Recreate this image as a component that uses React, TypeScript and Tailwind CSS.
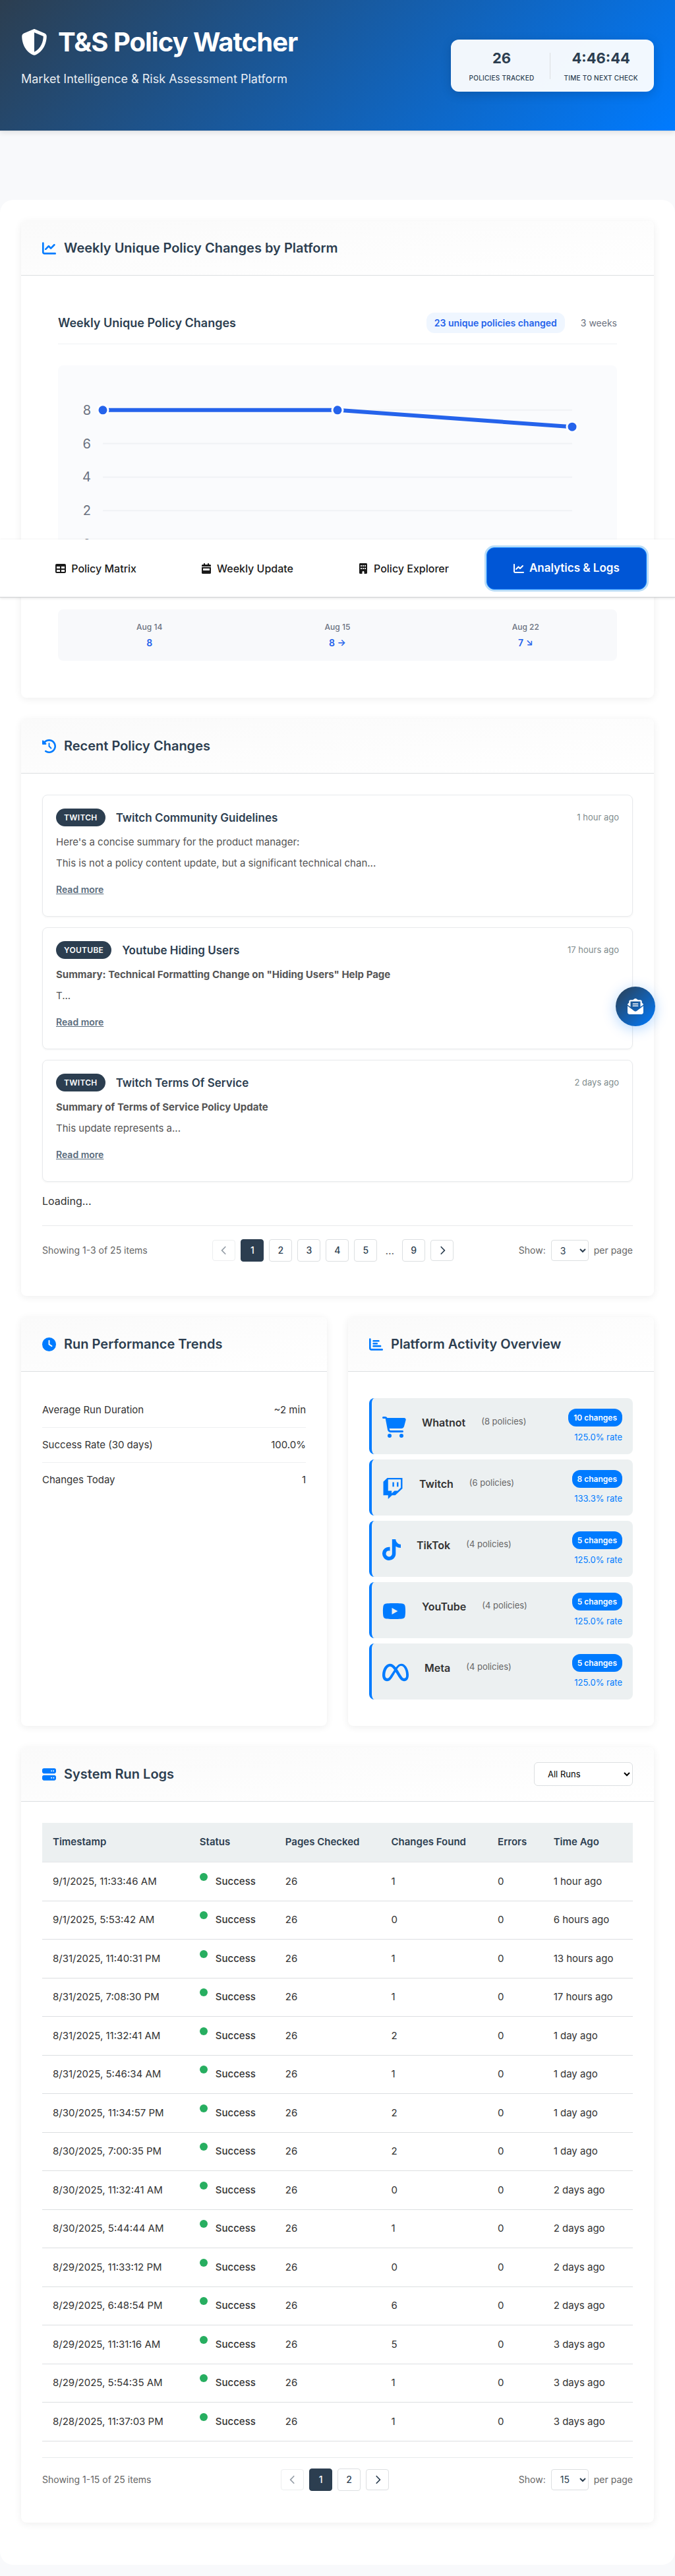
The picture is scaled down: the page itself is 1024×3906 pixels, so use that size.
import { useState } from "react";
import type { ReactNode } from "react";
import type { IconType } from "react-icons";
import {
  FaBuilding,
  FaCartShopping,
  FaChartBar,
  FaChartLine,
  FaChevronLeft,
  FaChevronRight,
  FaClock,
  FaClockRotateLeft,
  FaEnvelopeOpenText,
  FaMeta,
  FaServer,
  FaShieldHalved,
  FaTable,
  FaTiktok,
  FaTwitch,
  FaYoutube,
} from "react-icons/fa6";

const CalendarWeekIcon = ({ className }: { className?: string }) => (
  <svg viewBox="0 0 448 512" fill="currentColor" className={className} aria-hidden="true">
    <path d="M128 0c17.700 0 32 14.300 32 32V64H288V32c0-17.700 14.300-32 32-32s32 14.300 32 32V64h48c26.500 0 48 21.500 48 48v48H0V112C0 85.500 21.500 64 48 64H96V32c0-17.700 14.300-32 32-32zM0 192H448V464c0 26.500-21.500 48-48 48H48c-26.500 0-48-21.500-48-48V192zm80 64c-8.800 0-16 7.200-16 16v64c0 8.800 7.200 16 16 16H368c8.800 0 16-7.200 16-16V272c0-8.800-7.200-16-16-16H80z" />
  </svg>
);

const navItems = [
  { label: "Policy Matrix", icon: FaTable },
  { label: "Weekly Update", icon: CalendarWeekIcon },
  { label: "Policy Explorer", icon: FaBuilding },
  { label: "Analytics & Logs", icon: FaChartLine },
];

const weeks = [
  { label: "Aug 14", value: 8, arrow: "" },
  { label: "Aug 15", value: 8, arrow: " →" },
  { label: "Aug 22", value: 7, arrow: " ↘" },
];

const changes = [
  {
    platform: "Twitch",
    title: "Twitch Community Guidelines",
    ago: "1 hour ago",
    heading: "Here's a concise summary for the product manager:",
    bold: false,
    body: "This is not a policy content update, but a significant technical chan...",
  },
  {
    platform: "Youtube",
    title: "Youtube Hiding Users",
    ago: "17 hours ago",
    heading: 'Summary: Technical Formatting Change on "Hiding Users" Help Page',
    bold: true,
    body: "T...",
  },
  {
    platform: "Twitch",
    title: "Twitch Terms Of Service",
    ago: "2 days ago",
    heading: "Summary of Terms of Service Policy Update",
    bold: true,
    body: "This update represents a...",
  },
];

const trends = [
  ["Average Run Duration", "~2 min"],
  ["Success Rate (30 days)", "100.0%"],
  ["Changes Today", "1"],
];

const platforms = [
  { name: "Whatnot", policies: 8, changes: 10, rate: "125.0%", icon: FaCartShopping, width: "w-9" },
  { name: "Twitch", policies: 6, changes: 8, rate: "133.3%", icon: FaTwitch, width: "w-8" },
  { name: "TikTok", policies: 4, changes: 5, rate: "125.0%", icon: FaTiktok, width: "w-7" },
  { name: "YouTube", policies: 4, changes: 5, rate: "125.0%", icon: FaYoutube, width: "w-9" },
  { name: "Meta", policies: 4, changes: 5, rate: "125.0%", icon: FaMeta, width: "w-10" },
];

const columns = ["Timestamp", "Status", "Pages Checked", "Changes Found", "Errors", "Time Ago"];

const runs: [string, number, string][] = [
  ["9/1/2025, 11:33:46 AM", 1, "1 hour ago"],
  ["9/1/2025, 5:53:42 AM", 0, "6 hours ago"],
  ["8/31/2025, 11:40:31 PM", 1, "13 hours ago"],
  ["8/31/2025, 7:08:30 PM", 1, "17 hours ago"],
  ["8/31/2025, 11:32:41 AM", 2, "1 day ago"],
  ["8/31/2025, 5:46:34 AM", 1, "1 day ago"],
  ["8/30/2025, 11:34:57 PM", 2, "1 day ago"],
  ["8/30/2025, 7:00:35 PM", 2, "1 day ago"],
  ["8/30/2025, 11:32:41 AM", 0, "2 days ago"],
  ["8/30/2025, 5:44:44 AM", 1, "2 days ago"],
  ["8/29/2025, 11:33:12 PM", 0, "2 days ago"],
  ["8/29/2025, 6:48:54 PM", 6, "2 days ago"],
  ["8/29/2025, 11:31:16 AM", 5, "3 days ago"],
  ["8/29/2025, 5:54:35 AM", 1, "3 days ago"],
  ["8/28/2025, 11:37:03 PM", 1, "3 days ago"],
];

function Card({
  icon: Icon,
  title,
  action,
  children,
}: {
  icon: IconType;
  title: string;
  action?: ReactNode;
  children: ReactNode;
}) {
  return (
    <section className="flex flex-col rounded-lg bg-white shadow-[0_2px_12px_rgba(0,0,0,0.07)]">
      <header className="flex h-[83px] items-center justify-between rounded-t-lg border-b border-[#dcdfe1] bg-linear-to-br from-[#fafafa] to-white px-8">
        <h2 className="flex items-center gap-3 text-xl font-semibold text-[#2c3e50]">
          <Icon className="size-[21px] text-[#007bff]" />
          {title}
        </h2>
        {action}
      </header>
      <div className="flex-1 p-8">{children}</div>
    </section>
  );
}

function TrendChart() {
  const ticks = [8, 6, 4, 2, 0];
  const y = (value: number) => 271 - value * 25.4;
  return (
    <svg viewBox="0 0 848 338" className="block w-full rounded-lg bg-[#fafbfd]" role="img" aria-label="Weekly unique policy changes">
      {ticks.map((tick) => (
        <g key={tick}>
          <line x1="68" x2="780" y1={y(tick)} y2={y(tick)} stroke="#f0f2f5" strokeWidth="2" />
          <text x="50" y={y(tick) + 7} textAnchor="end" fontSize="20" fill="#6b7280">
            {tick}
          </text>
        </g>
      ))}
      <polyline points={`68,${y(8)} 424,${y(8)} 780,${y(7)}`} fill="none" stroke="#2563eb" strokeWidth="6" />
      {[
        [68, 8],
        [424, 8],
        [780, 7],
      ].map(([x, value]) => (
        <circle key={x} cx={x} cy={y(value)} r="8" fill="#2563eb" stroke="#fff" strokeWidth="3" />
      ))}
    </svg>
  );
}

function Pagination({
  pages,
  range,
  size,
  id,
  spacing = "py-4",
}: {
  pages: (number | string)[];
  range: string;
  size: number;
  id: string;
  spacing?: string;
}) {
  const [page, setPage] = useState(1);
  const box = "flex w-[35px] items-center justify-center rounded border text-sm";
  return (
    <nav
      aria-label={`${id} pages`}
      className={`flex items-center justify-between border-t border-[#e8eaec] text-sm text-[#666] ${spacing}`}
    >
      <span>{range}</span>
      <div className="flex items-center gap-2">
        <button type="button" aria-label="Previous page" disabled className={`${box} h-8 border-[#dcdfe1] bg-white text-[#2c3e50] opacity-50`}>
          <FaChevronLeft className="size-[14px]" />
        </button>
        {pages.map((entry) =>
          typeof entry === "string" ? (
            <span key={entry} className="px-1 text-base leading-5">
              {entry}
            </span>
          ) : (
            <button
              key={entry}
              type="button"
              onClick={() => setPage(entry)}
              className={`${box} h-[34px] font-medium ${
                entry === page ? "border-[#2c3e50] bg-[#2c3e50] text-white" : "border-[#dcdfe1] bg-white text-[#2c3e50]"
              }`}
            >
              {entry}
            </button>
          ),
        )}
        <button type="button" aria-label="Next page" className={`${box} h-8 border-[#dcdfe1] bg-white text-[#2c3e50]`}>
          <FaChevronRight className="size-[14px]" />
        </button>
      </div>
      <div className="flex items-center gap-2">
        <label htmlFor={id}>Show:</label>
        <select id={id} defaultValue={size} className="h-8 w-[57px] rounded border border-[#dcdfe1] bg-white pl-[9px] text-sm text-[#2c3e50]">
          <option>{size}</option>
          <option>50</option>
        </select>
        <span>per page</span>
      </div>
    </nav>
  );
}

export default function App() {
  const [tab, setTab] = useState("Analytics & Logs");

  return (
    <div className="relative min-h-screen bg-[#f8f9fb] pb-[17px] font-['Inter',sans-serif] text-base text-[#333]">
      <header className="flex h-[199px] items-start justify-between border-b border-[#dcdfe1] bg-linear-[135deg,#2c3e50_0%,#007bff_100%] px-8 shadow-[0_2px_8px_rgba(0,0,0,0.1)]">
        <div className="pt-9 text-white">
          <h1 className="flex items-center gap-4 text-[40px] leading-[56px] font-bold tracking-tight">
            <FaShieldHalved className="size-10" />
            T&amp;S Policy Watcher
          </h1>
          <p className="mt-4 text-lg leading-6 opacity-90">Market Intelligence &amp; Risk Assessment Platform</p>
        </div>
        <dl className="mt-[60px] flex h-[79px] items-center rounded-xl bg-white/95 px-1 text-center text-[#2c3e50] shadow-[0_4px_16px_rgba(0,0,0,0.15)]">
          <div className="flex flex-col-reverse px-6">
            <dt className="mt-2 text-[10px] leading-4 font-medium tracking-wide uppercase">Policies Tracked</dt>
            <dd className="text-[22px] leading-7 font-bold">26</dd>
          </div>
          <div className="h-10 w-px bg-[#dcdfe1]" />
          <div className="flex flex-col-reverse px-5">
            <dt className="mt-2 text-[10px] leading-4 font-medium tracking-wide uppercase">Time to next check</dt>
            <dd className="text-[22px] leading-7 font-bold">4:46:44</dd>
          </div>
        </dl>
      </header>

      <nav
        aria-label="Sections"
        className="absolute inset-x-0 top-[818px] z-10 flex h-[88px] items-center justify-center gap-4 border-b border-[#d0d2d4] bg-white shadow-[0_1px_4px_rgba(0,0,0,0.12)]"
      >
        {navItems.map(({ label, icon: Icon }) => (
          <button
            key={label}
            type="button"
            onClick={() => setTab(label)}
            className={`flex h-16 items-center gap-2 rounded-xl border px-10 ${
              label === tab
                ? "border-[#007bff] bg-[#0056d6] text-[17px] font-semibold text-white ring-3 ring-[#b9dcf7]"
                : "border-transparent text-base font-medium text-[#1a1a1a]"
            }`}
          >
            <Icon className="size-4" />
            {label}
          </button>
        ))}
      </nav>

      <button
        type="button"
        aria-label="Subscribe to updates"
        className="absolute top-[1496px] right-[30px] z-10 flex size-[60px] items-center justify-center rounded-full bg-linear-[135deg,#2c3e50_0%,#007bff_100%] text-white shadow-[0_4px_20px_rgba(0,123,255,0.3)]"
      >
        <FaEnvelopeOpenText className="size-6" />
      </button>

      <main className="mt-[104px] flex flex-col gap-8 rounded-[20px] bg-white px-8 pt-8 pb-16">
        <Card icon={FaChartLine} title="Weekly Unique Policy Changes by Platform">
          <div className="p-6">
            <div className="flex h-12 items-start justify-between border-b border-[#f0f2f4]">
              <h3 className="text-lg leading-8 font-semibold text-[#2c3e50]">Weekly Unique Policy Changes</h3>
              <div className="flex items-center gap-6 text-sm leading-[31px]">
                <span className="rounded-xl bg-[#eff6ff] px-3 font-semibold text-[#2563eb]">23 unique policies changed</span>
                <span className="text-[#6b7280]">3 weeks</span>
              </div>
            </div>
            <div className="mt-8">
              <TrendChart />
            </div>
            <dl className="mt-8 grid h-[78px] grid-cols-3 items-center gap-2 rounded-lg bg-[#f8f9fb] text-center">
              {weeks.map((week) => (
                <div key={week.label}>
                  <dt className="text-xs leading-6 font-medium text-[#6b7280]">{week.label}</dt>
                  <dd className="text-sm leading-6 font-semibold text-[#2563eb]">
                    {week.value}
                    {week.arrow}
                  </dd>
                </div>
              ))}
            </dl>
          </div>
        </Card>

        <Card icon={FaClockRotateLeft} title="Recent Policy Changes">
          <div className="flex flex-col gap-4">
            {changes.map((change) => (
              <article key={change.title} className="h-[185px] rounded-lg border border-[#e8eaec] px-5 pt-5 shadow-[0_1px_3px_rgba(0,0,0,0.05)]">
                <header className="flex items-center">
                  <span className="rounded-2xl bg-[#2c3e50] px-3 text-xs leading-[27px] font-semibold tracking-wide text-white uppercase">
                    {change.platform}
                  </span>
                  <h3 className="ml-4 text-[17px] leading-6 font-semibold text-[#2c3e50]">{change.title}</h3>
                  <time className="ml-auto text-[13px] text-[#7f8c8d]">{change.ago}</time>
                </header>
                <p className={`mt-3 text-[15px] leading-6 text-[#555] ${change.bold ? "font-bold" : ""}`}>{change.heading}</p>
                <p className="mt-2 text-[15px] leading-6 text-[#555]">{change.body}</p>
                <a href="#details" className="mt-4 inline-block text-sm leading-6 font-semibold text-[#5a6c7d] underline">
                  Read more
                </a>
              </article>
            ))}
          </div>
          <p className="mt-4 mb-6 leading-[26px]">Loading...</p>
          <Pagination id="changes" pages={[1, 2, 3, 4, 5, "...", 9]} range="Showing 1-3 of 25 items" size={3} spacing="py-5" />
        </Card>

        <div className="grid grid-cols-2 gap-8">
          <Card icon={FaClock} title="Run Performance Trends">
            <dl className="text-[15px]">
              {trends.map(([label, value]) => (
                <div key={label} className="flex h-[53px] items-center justify-between border-b border-[#eef0f1] last:border-0">
                  <dt>{label}</dt>
                  <dd>{value}</dd>
                </div>
              ))}
            </dl>
          </Card>
          <Card icon={FaChartBar} title="Platform Activity Overview">
            <ul className="flex flex-col gap-2 py-2">
              {platforms.map(({ icon: Icon, ...platform }) => (
                <li key={platform.name} className="flex h-[85px] items-start rounded-lg border-l-4 border-[#007bff] bg-[#ecf0f1] p-4">
                  <Icon className={`mt-3 h-8 text-[#007bff] ${platform.width}`} />
                  <strong className="mt-2 ml-6 leading-[26px] font-semibold">{platform.name}</strong>
                  <span className="mt-2 ml-6 text-[13px] leading-[22px] text-[#666]">({platform.policies} policies)</span>
                  <div className="ml-auto flex flex-col items-end">
                    <span className="rounded-xl bg-[#007bff] px-2 text-xs leading-[27px] font-semibold text-white">
                      {platform.changes} changes
                    </span>
                    <span className="mt-1 text-[13px] leading-6 text-[#007bff]">{platform.rate} rate</span>
                  </div>
                </li>
              ))}
            </ul>
          </Card>
        </div>

        <Card
          icon={FaServer}
          title="System Run Logs"
          action={
            <select aria-label="Filter runs" className="h-9 w-[150px] rounded-md border border-[#dcdfe1] bg-white pl-4 text-[13px] text-black">
              <option>All Runs</option>
              <option>Successful</option>
            </select>
          }
        >
          <table className="w-full border-collapse text-left text-[15px] leading-[26px]">
            <thead>
              <tr className="h-[59px] border-b border-[#e3e6e8] bg-[#ecf0f1] text-[#2c3e50]">
                {columns.map((column) => (
                  <th key={column} scope="col" className="px-4 font-semibold">
                    {column}
                  </th>
                ))}
              </tr>
            </thead>
            <tbody>
              {runs.map(([timestamp, found, ago]) => (
                <tr key={timestamp} className="h-[59px] border-b border-[#dcdfe1] even:h-[58px]">
                  <td className="px-4">{timestamp}</td>
                  <td className="px-4">
                    <span className="flex items-start gap-3 font-medium">
                      <span className="size-3 rounded-full bg-[#27ae60]" />
                      Success
                    </span>
                  </td>
                  <td className="px-4">26</td>
                  <td className="px-4">{found}</td>
                  <td className="px-4">0</td>
                  <td className="px-4">{ago}</td>
                </tr>
              ))}
            </tbody>
          </table>
          <div className="mt-6">
            <Pagination id="runs" pages={[1, 2]} range="Showing 1-15 of 25 items" size={15} />
          </div>
        </Card>
      </main>
    </div>
  );
}
